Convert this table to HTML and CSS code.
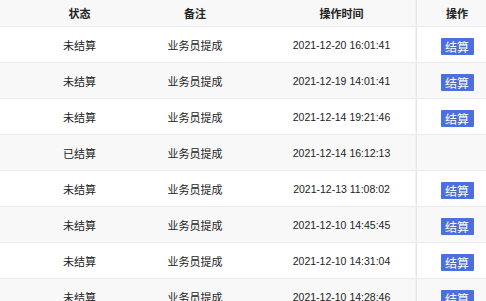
FILE: index.html
```html
<!DOCTYPE html>
<html lang="zh-CN">
<head>
<meta charset="utf-8">
<link rel="stylesheet" href="styles.css">
</head>
<body>
<div class="table">
  <div class="row head">
    <div class="cell"></div>
    <div class="cell">状态</div>
    <div class="cell">备注</div>
    <div class="cell">操作时间</div>
    <div class="cell fixed">操作</div>
  </div>
  <div class="row">
    <div class="cell"></div><div class="cell">未结算</div><div class="cell">业务员提成</div><div class="cell date">2021-12-20 16:01:41</div>
    <div class="cell fixed"><span class="btn">结算</span></div>
  </div>
  <div class="row alt">
    <div class="cell"></div><div class="cell">未结算</div><div class="cell">业务员提成</div><div class="cell date">2021-12-19 14:01:41</div>
    <div class="cell fixed"><span class="btn">结算</span></div>
  </div>
  <div class="row">
    <div class="cell"></div><div class="cell">未结算</div><div class="cell">业务员提成</div><div class="cell date">2021-12-14 19:21:46</div>
    <div class="cell fixed"><span class="btn">结算</span></div>
  </div>
  <div class="row alt">
    <div class="cell"></div><div class="cell">已结算</div><div class="cell">业务员提成</div><div class="cell date">2021-12-14 16:12:13</div>
    <div class="cell fixed"></div>
  </div>
  <div class="row">
    <div class="cell"></div><div class="cell">未结算</div><div class="cell">业务员提成</div><div class="cell date">2021-12-13 11:08:02</div>
    <div class="cell fixed"><span class="btn">结算</span></div>
  </div>
  <div class="row alt">
    <div class="cell"></div><div class="cell">未结算</div><div class="cell">业务员提成</div><div class="cell date">2021-12-10 14:45:45</div>
    <div class="cell fixed"><span class="btn">结算</span></div>
  </div>
  <div class="row">
    <div class="cell"></div><div class="cell">未结算</div><div class="cell">业务员提成</div><div class="cell date">2021-12-10 14:31:04</div>
    <div class="cell fixed"><span class="btn">结算</span></div>
  </div>
  <div class="row alt">
    <div class="cell"></div><div class="cell">未结算</div><div class="cell">业务员提成</div><div class="cell date">2021-12-10 14:28:46</div>
    <div class="cell fixed"><span class="btn">结算</span></div>
  </div>
</div>
</body>
</html>
```
FILE: styles.css
```css
html, body {
  margin: 0;
  padding: 0;
  background: #ffffff;
  overflow: hidden;
}
body {
  width: 486px;
  height: 301px;
  font-family: "Liberation Sans", "Noto Sans CJK SC", sans-serif;
  font-size: 11px;
  color: #222222;
}
.table {
  width: 497px;
}
.row {
  display: grid;
  grid-template-columns: 36px 87px 144px 149px 81px;
  height: 35px;
  border-bottom: 1px solid #ebebeb;
  background: #ffffff;
}
.row.alt {
  background: #f8f8f8;
}
.row.head {
  height: 26px;
  background: #f8f8f8;
  font-weight: bold;
  color: #222222;
}
.cell {
  display: flex;
  align-items: center;
  justify-content: center;
  white-space: nowrap;
}
.date {
  font-size: 10.5px;
}
.fixed {
  border-left: 1px solid #e6e6e6;
  box-shadow: -1px 0 0 #f2f2f2;
}
.btn {
  display: inline-flex;
  align-items: center;
  justify-content: center;
  width: 33px;
  height: 17px;
  margin-top: 3px;
  background: #4a6fdf;
  color: #ffffff;
  font-size: 12px;
  border-radius: 1px;
}
```
